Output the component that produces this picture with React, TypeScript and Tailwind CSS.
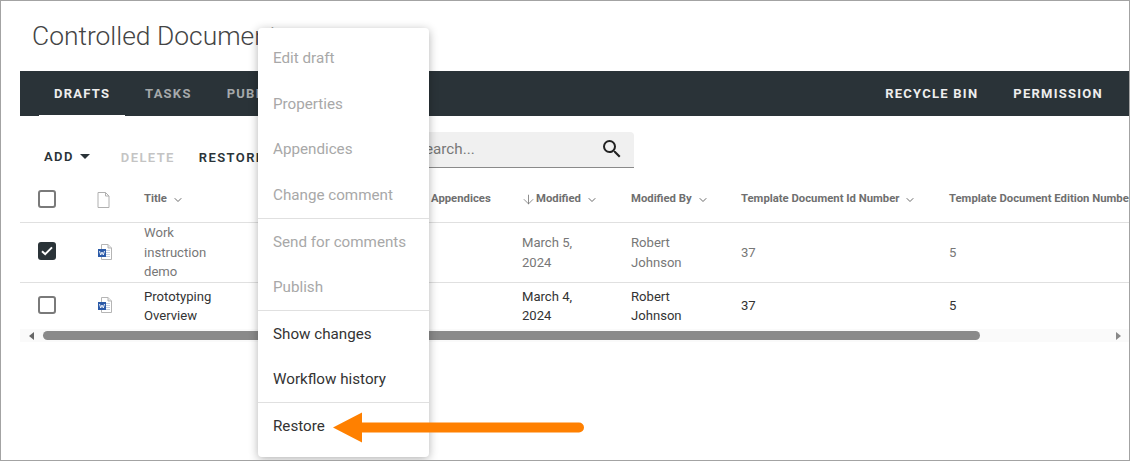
import React from "react";
import { ChevronDown, ArrowDown } from "lucide-react";

const WordIcon = () => (
  <svg width="14" height="16" viewBox="0 0 14 16" className="block">
    <path d="M3.5 .5H10L13.5 4V15.5H3.5Z" fill="#fff" stroke="#b5b5b5" />
    <path d="M10 .5V4H13.5" fill="#e8e8e8" stroke="#b5b5b5" />
    <path d="M8 6.5H12M8 8.5H12M8 10.5H12M8 12.5H12" stroke="#c5cfe0" />
    <rect x="0" y="5" width="8" height="8" fill="#2b5aa8" />
    <path d="M1.5 7L2.7 11L4 8L5.3 11L6.5 7" stroke="#fff" strokeWidth="0.9" fill="none" />
  </svg>
);

const Box = ({ checked }: { checked?: boolean }) =>
  checked ? (
    <div className="w-[18px] h-[18px] rounded-[3px] bg-[#2a3338] flex items-center justify-center">
      <svg width="12" height="10" viewBox="0 0 12 10">
        <path d="M1 5.2L4.2 8.2L11 1.4" stroke="#fff" strokeWidth="2" fill="none" />
      </svg>
    </div>
  ) : (
    <div className="w-[18px] h-[18px] rounded-[3px] border-2 border-[#7a7a7a] bg-white" />
  );

const Head = ({ label, sorted }: { label: string; sorted?: boolean }) => (
  <div className="flex items-center text-[11.3px] font-bold text-[#6f6f6f] whitespace-nowrap">
    {sorted && <ArrowDown size={15} strokeWidth={1.25} className="-ml-[1px]" />}
    <span>{label}</span>
    <ChevronDown size={12} strokeWidth={1.75} className="ml-[5px] text-[#555]" />
  </div>
);

const rowCols = "grid grid-cols-[64px_60px_287px_91px_109px_110px_208px_200px] items-center";

const Row = ({
  title,
  date,
  checked,
  color,
  h,
}: {
  title: string;
  date: string;
  checked?: boolean;
  color: string;
  h: string;
}) => (
  <div className={`${rowCols} ${h} text-[13.1px] leading-[19.5px] ${color}`}>
    <div className="pl-[18px] pb-[3px]">
      <Box checked={checked} />
    </div>
    <div className="pl-[14px] pb-[2px]">
      <WordIcon />
    </div>
    <div className="w-[80px]">{title}</div>
    <div />
    <div className="w-[70px]">{date}</div>
    <div className="w-[70px]">Robert Johnson</div>
    <div>37</div>
    <div>5</div>
  </div>
);

const Item = ({ label, on, h = "h-[45.5px]" }: { label: string; on?: boolean; h?: string }) => (
  <div className={`${h} flex items-center pl-[15px] text-[15.2px] ${on ? "text-[#333]" : "text-[#a8a8a8]"}`}>{label}</div>
);

export default function App() {
  return (
    <div
      className="relative w-[1130px] h-[461px] bg-white overflow-hidden border border-[#a3a3a3]"
      style={{ fontFamily: "Roboto, sans-serif" }}
    >
      <div className="h-[70px] pl-[31px] pt-[17px] text-[26.4px] leading-[36px] font-light text-[#444] whitespace-nowrap">
        Controlled Documents
      </div>

      <div className="ml-[19px] h-[45px] bg-[#2a3338] flex items-center text-[13px] font-bold tracking-[1.25px] text-[#eee] whitespace-nowrap">
        <div className="relative h-full w-[105px] flex items-center pl-[34px] pt-[1px]">
          DRAFTS
          <div className="absolute left-[19px] w-[86px] bottom-0 h-[1px] bg-white" />
        </div>
        <div className="ml-[20px] pt-[1px] text-[#a5a9ab]">TASKS</div>
        <div className="ml-[35px] pt-[1px] text-[#a5a9ab]">PUBLISHED</div>
        <div className="ml-auto pt-[1px]">RECYCLE BIN</div>
        <div className="ml-[35px] mr-[26px] pt-[1px]">PERMISSION</div>
      </div>

      <div className="ml-[19px] mt-[16px] h-[36px] flex text-[13px] font-semibold tracking-[1.4px] text-[#2a3338] whitespace-nowrap">
        <div className="ml-[24px] mt-[17px] h-[16px] flex items-center">
          ADD
          <svg width="10" height="5" viewBox="0 0 10 5" className="ml-[6px] mb-[2px]">
            <path d="M0 0H10L5 5Z" fill="#2a3338" />
          </svg>
        </div>
        <div className="ml-[31px] mt-[16px] h-[16px] text-[#c4c4c4]">DELETE</div>
        <div className="ml-[24px] mt-[16px] h-[16px]">RESTORE</div>
        <div className="absolute left-[393px] w-[240px] h-[36px] rounded-t-[4px] bg-[#f0f0f0] border-b border-[#8a8a8a] flex items-center pl-[22px] pr-[10px] justify-between">
          <span className="text-[15.2px] font-normal tracking-normal text-[#777]">Search...</span>
          <svg width="24" height="24" viewBox="0 0 24 24" className="mb-[2px]">
            <path
              d="M15.5 14h-.79l-.28-.27A6.471 6.471 0 0 0 16 9.5 6.5 6.5 0 1 0 9.5 16c1.61 0 3.09-.59 4.23-1.57l.27.28v.79l5 4.99L20.49 19l-4.99-5zm-6 0C7.01 14 5 11.99 5 9.5S7.01 5 9.5 5 14 7.01 14 9.5 11.99 14 9.5 14z"
              fill="#222"
            />
          </svg>
        </div>
      </div>

      <div className="ml-[19px] mt-[9px] overflow-hidden">
        <div className="w-[1300px]">
          <div className={`${rowCols} h-[46px] border-b border-[#e0e0e0]`}>
            <div className="pl-[18px] pb-[2px]">
              <Box />
            </div>
            <div className="pl-[13px]">
              <svg width="13" height="16" viewBox="0 0 13 16" className="block">
                <path d="M1 .5H8.5L12 4V15.5H1Z" fill="#fff" stroke="#b0b0b0" />
                <path d="M8.5 .5V4H12" fill="none" stroke="#b0b0b0" />
              </svg>
            </div>
            <Head label="Title" />
            <div className="text-[11.3px] font-bold text-[#6f6f6f]">Appendices</div>
            <Head label="Modified" sorted />
            <Head label="Modified By" />
            <Head label="Template Document Id Number" />
            <Head label="Template Document Edition Number" />
          </div>
          <div className="border-b border-[#e0e0e0]">
            <Row title="Work instruction demo" date="March 5, 2024" checked color="text-[#777]" h="h-[59px]" />
          </div>
          <Row title="Prototyping Overview" date="March 4, 2024" color="text-[#333]" h="h-[46px]" />
        </div>
        <div className="h-[13px] bg-[#fafafa] flex items-center">
          <svg width="6" height="8" viewBox="0 0 6 8" className="ml-[9px]">
            <path d="M5 0V8L0 4Z" fill="#666" />
          </svg>
          <div className="ml-[8px] w-[937px] h-[9px] rounded-full bg-[#8a8a8a]" />
          <svg width="6" height="8" viewBox="0 0 6 8" className="ml-auto mr-[8px]">
            <path d="M1 0V8L6 4Z" fill="#888" />
          </svg>
        </div>
      </div>

      <div className="absolute left-[257px] top-[27px] w-[171px] h-[429px] bg-white rounded-[4px] shadow-[0_2px_10px_rgba(0,0,0,0.3)] pt-[8px] flex flex-col">
        <Item label="Edit draft" />
        <Item label="Properties" />
        <Item label="Appendices" />
        <Item label="Change comment" h="h-[45px]" />
        <div className="border-t border-[#e0e0e0]" />
        <Item label="Send for comments" h="h-[46px] pt-[1px]" />
        <Item label="Publish" h="h-[45px]" />
        <div className="border-t border-[#e0e0e0]" />
        <Item label="Show changes" on h="h-[46px] pt-[1px]" />
        <Item label="Workflow history" on h="h-[45px]" />
        <div className="border-t border-[#e0e0e0]" />
        <Item label="Restore" on h="h-[46px] pt-[1px]" />
      </div>

      <svg width="252" height="32" viewBox="0 0 252 32" className="absolute left-[332px] top-[411px]">
        <path d="M0 15.5L29 0.5V10.5H246a5 5 0 0 1 0 10H29V30.5Z" fill="#ff8000" />
      </svg>
    </div>
  );
}
